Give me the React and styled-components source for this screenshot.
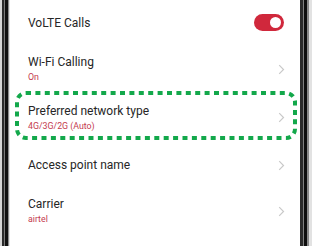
import styled, { createGlobalStyle } from "styled-components";

const GlobalStyle = createGlobalStyle`
  html, body {
    margin: 0;
    padding: 0;
    background: #ffffff;
  }
  body {
    font-family: Roboto, "Noto Sans", "Liberation Sans", sans-serif;
  }
`;

const settings = [
  { id: "volte", title: "VoLTE Calls", toggle: true, height: 45 },
  { id: "wifi", title: "Wi-Fi Calling", sub: "On", height: 48 },
  {
    id: "network",
    title: "Preferred network type",
    sub: "4G/3G/2G (Auto)",
    height: 49,
    marked: true,
  },
  { id: "apn", title: "Access point name", height: 46 },
  { id: "carrier", title: "Carrier", sub: "airtel", height: 46 },
];

function Chevron() {
  return (
    <ChevronIcon viewBox="0 0 7 11" width="7" height="11">
      <path d="M1.2 1.2l4.3 4.3-4.3 4.3" fill="none" stroke="#c9c9c9" strokeWidth="1.2" />
    </ChevronIcon>
  );
}

function DashedMark() {
  return (
    <Mark viewBox="0 0 282 49" width="282" height="49">
      <rect
        x="2"
        y="2"
        width="278"
        height="45"
        rx="9"
        fill="none"
        stroke="#13a84b"
        strokeWidth="4"
        strokeDasharray="5 4.4"
      />
    </Mark>
  );
}

function App() {
  return (
    <>
      <GlobalStyle />
      <Frame>
        <LeftBezel />
        <Screen>
          {settings.map((item) => (
            <Row key={item.id} $height={item.height}>
              <Texts>
                <Title>{item.title}</Title>
                {item.sub && <Sub>{item.sub}</Sub>}
              </Texts>
              {item.toggle ? (
                <Toggle>
                  <Knob />
                </Toggle>
              ) : (
                <Chevron />
              )}
              {item.marked && <DashedMark />}
            </Row>
          ))}
        </Screen>
        <RightBezel />
      </Frame>
    </>
  );
}

export default App;

const Frame = styled.div`
  display: flex;
  width: 312px;
  height: 246px;
  overflow: hidden;
`;

const LeftBezel = styled.div`
  width: 10px;
  flex-shrink: 0;
  background: linear-gradient(
    to right,
    #d6d6d6 0 2px,
    #2a2a2a 2px 4px,
    #7a7a7a 4px 5px,
    #101010 5px 8px,
    #8c8c8c 8px 9px,
    #e4e4e4 9px 10px
  );
`;

const RightBezel = styled.div`
  width: 12px;
  flex-shrink: 0;
  background: linear-gradient(
    to right,
    #2a2a2a 0 3px,
    #808080 3px 4px,
    #0e0e0e 4px 7px,
    #8a8a8a 7px 9px,
    #e2e2e2 9px 12px
  );
`;

const Screen = styled.div`
  flex: 1;
  background: #ffffff;
  display: flex;
  flex-direction: column;
`;

const Row = styled.div`
  position: relative;
  display: flex;
  align-items: center;
  justify-content: space-between;
  height: ${(p) => p.$height}px;
  padding: 0 16px 0 18px;
  flex-shrink: 0;
`;

const Texts = styled.div`
  display: flex;
  flex-direction: column;
`;

const Title = styled.div`
  font-size: 12px;
  line-height: 16px;
  color: #262626;
`;

const Sub = styled.div`
  font-size: 8.8px;
  line-height: 14px;
  color: #c43a4e;
`;

const ChevronIcon = styled.svg`
  display: block;
  margin-right: -1px;
`;

const Toggle = styled.div`
  width: 30px;
  height: 17px;
  border-radius: 9px;
  background: #d0283c;
  display: flex;
  align-items: center;
  justify-content: flex-end;
  padding-right: 3px;
  box-sizing: border-box;
`;

const Knob = styled.div`
  width: 11px;
  height: 11px;
  border-radius: 50%;
  background: #ffffff;
`;

const Mark = styled.svg`
  position: absolute;
  left: 5px;
  top: -2px;
  pointer-events: none;
`;
